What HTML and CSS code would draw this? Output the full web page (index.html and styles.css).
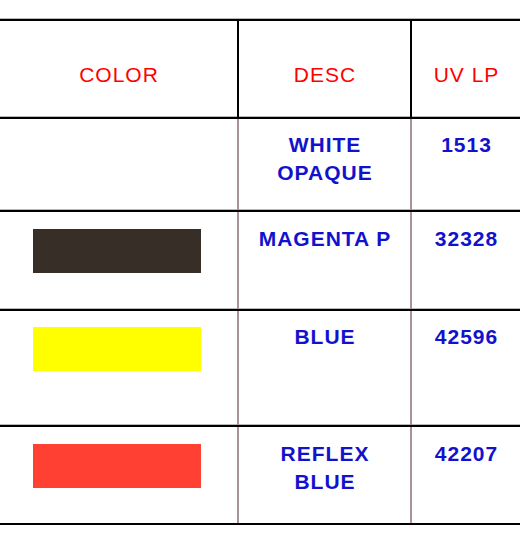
FILE: index.html
```html
<!DOCTYPE html>
<html>
<head>
<meta charset="utf-8">
<link rel="stylesheet" href="styles.css">
</head>
<body>
<div class="sheet">
  <div class="row head">
    <div class="cell">COLOR</div>
    <div class="cell">DESC</div>
    <div class="cell">UV LP</div>
  </div>
  <div class="row r1">
    <div class="cell swcell"></div>
    <div class="cell">WHITE<br>OPAQUE</div>
    <div class="cell">1513</div>
  </div>
  <div class="row r2">
    <div class="cell swcell"><div class="swatch dark"></div></div>
    <div class="cell">MAGENTA P</div>
    <div class="cell">32328</div>
  </div>
  <div class="row r3">
    <div class="cell swcell"><div class="swatch yellow"></div></div>
    <div class="cell">BLUE</div>
    <div class="cell">42596</div>
  </div>
  <div class="row r4">
    <div class="cell swcell"><div class="swatch red"></div></div>
    <div class="cell">REFLEX<br>BLUE</div>
    <div class="cell">42207</div>
  </div>
</div>
</body>
</html>
```

FILE: styles.css
```css
html, body {
  margin: 0;
  padding: 0;
  background: #ffffff;
}

.sheet {
  margin-top: 19px;
  width: 520px;
  font-family: "Liberation Sans", Arial, sans-serif;
  border-bottom: 2px solid #000;
}

.row {
  display: grid;
  grid-template-columns: 237px 173px 110px;
  border-top: 2px solid #000;
  box-shadow: 0 -1px 0 #b8b8b8;
}

.row .cell + .cell {
  border-left: 2px solid #a89494;
}

.head .cell + .cell {
  border-left-color: #000;
}

.head {
  height: 96px;
}

.r1 { height: 91px; }
.r2 { height: 97px; }
.r3 { height: 114px; }
.r4 { height: 96px; }

.cell {
  text-align: center;
  line-height: 28px;
}

.head .cell {
  color: #ff0000;
  font-size: 21px;
  letter-spacing: 1px;
  padding-top: 40px;
  padding-left: 1px;
}

.r1 .cell, .r2 .cell, .r3 .cell, .r4 .cell {
  color: #1212cc;
  font-weight: bold;
  font-size: 21px;
  letter-spacing: 1px;
  padding-top: 12px;
  padding-left: 1px;
}

.r2 .cell, .r4 .cell {
  padding-top: 13px;
}

.row .swcell {
  padding-top: 17px;
  padding-left: 0;
}

.r3 .swcell {
  padding-top: 16px;
}

.swatch {
  width: 168px;
  height: 44px;
  margin-left: 33px;
}

.dark { background: #372e27; }
.yellow { background: #ffff00; }
.red { background: #ff4033; }
```
